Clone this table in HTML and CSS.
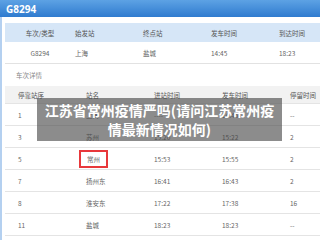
FILE: index.html
```html
<!DOCTYPE html>
<html lang="zh">
<head>
<meta charset="utf-8">
<link rel="stylesheet" href="styles.css">
</head>
<body>
<div class="page">
  <div class="titlebar">G8294</div>
  <div class="panel">
    <div class="summary">
      <div class="srow shead">
        <span class="c1">车次/类型</span><span>始发站</span><span>终点站</span><span>发车时间</span><span>到达时间</span>
      </div>
      <div class="srow sdata">
        <span class="c1">G8294</span><span>上海</span><span>盐城</span><span>14:45</span><span>18:23</span>
      </div>
    </div>
    <div class="label">车次详情</div>
    <div class="detail">
      <div class="drow dhead"><span>停靠站序</span><span>站名</span><span>进站时间</span><span>发车时间</span><span>停留时间</span></div>
      <div class="drow"><span>1</span><span>上海</span><span>----</span><span>14:45</span><span>--</span></div>
      <div class="drow"><span>3</span><span>苏州</span><span>15:20</span><span>15:22</span><span>2</span></div>
      <div class="drow"><span>5</span><span><b class="mark">常州</b></span><span>15:53</span><span>15:55</span><span>2</span></div>
      <div class="drow"><span>7</span><span>扬州东</span><span>16:41</span><span>16:43</span><span>2</span></div>
      <div class="drow"><span>8</span><span>淮安东</span><span>17:22</span><span>17:38</span><span>16</span></div>
      <div class="drow"><span>11</span><span>盐城</span><span>18:23</span><span>18:23</span><span>--</span></div>
    </div>
  </div>
  <div class="overlay">江苏省常州疫情严吗(请问江苏常州疫<br>情最新情况如何)</div>
</div>
</body>
</html>
```
FILE: styles.css
```css
html, body {
  margin: 0;
  padding: 0;
  width: 320px;
  height: 240px;
  overflow: hidden;
  background: #fff;
}
body {
  font-family: "Noto Sans CJK SC", "Noto Sans", sans-serif;
  color: #666;
}
.page {
  position: relative;
  width: 320px;
  height: 240px;
}
.titlebar {
  height: 17px;
  line-height: 18px;
  padding-left: 6px;
  color: #fff;
  font-weight: bold;
  font-size: 10px;
  font-family: "Open Sans", "Noto Sans", sans-serif;
  background: linear-gradient(#5da2e4, #2f7bcf);
}
.panel {
  border-left: 2px solid #b4d0f0;
  padding: 6px 0 0 3px;
  width: 320px;
  height: 223px;
  box-sizing: border-box;
  font-size: 6.5px;
}
.srow {
  display: grid;
  grid-template-columns: 70px 68px 68px 68px minmax(0, 1fr);
  align-items: center;
  white-space: nowrap;
}
.srow .c1 { text-align: center; }
.shead {
  height: 19px;
  background: #d6e6f7;
  color: #555;
}
.sdata {
  height: 21px;
  border-bottom: 1px solid #e2e2e2;
}
.label {
  height: 22px;
  line-height: 22px;
  padding-left: 11px;
  color: #888;
}
.drow {
  display: grid;
  grid-template-columns: 68px 68px 68px 68px minmax(0, 1fr);
  align-items: center;
  height: 21px;
  border-bottom: 1px solid #e4e4e4;
  white-space: nowrap;
}
.drow span { padding-left: 13px; }
.dhead {
  height: 17px;
  background: #f2f2f2;
  color: #555;
}
.mark {
  font-weight: normal;
  display: inline-block;
  margin-left: -7px;
  padding: 3px 6px;
  border: 2px solid #e8383b;
  line-height: 8px;
}
.overlay {
  position: absolute;
  left: 37px;
  top: 98px;
  width: 245px;
  height: 43px;
  background: rgba(70, 70, 70, 0.62);
  color: #fff;
  font-weight: bold;
  font-size: 14px;
  line-height: 19px;
  text-align: center;
  display: flex;
  align-items: center;
  justify-content: center;
}
```
